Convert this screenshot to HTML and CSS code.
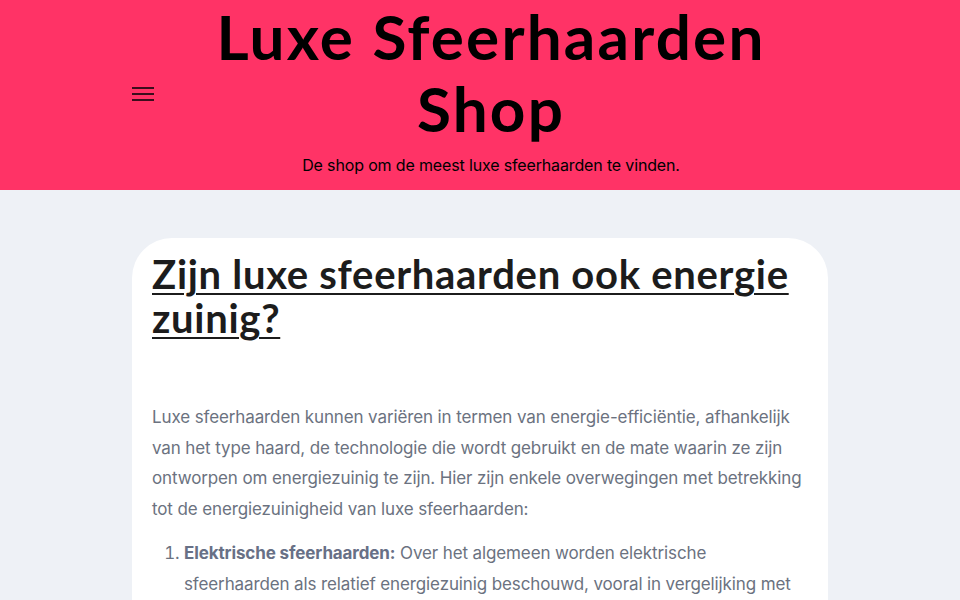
FILE: index.html
```
<!DOCTYPE html>
<html lang="nl">
<head>
<meta charset="utf-8">
<title>Luxe Sfeerhaarden Shop</title>
<link rel="stylesheet" href="styles.css">
</head>
<body>
<header class="site-header">
  <div class="header-inner">
    <button class="menu-toggle" aria-label="Menu">
      <svg width="22" height="14" viewBox="0 0 22 14"><rect x="0" y="0" width="22" height="2" fill="#3b0d1c"/><rect x="0" y="6" width="22" height="2" fill="#3b0d1c"/><rect x="0" y="12" width="22" height="2" fill="#3b0d1c"/></svg>
    </button>
    <div class="branding">
      <h1 class="site-title">Luxe Sfeerhaarden Shop</h1>
      <p class="site-tagline">De shop om de meest luxe sfeerhaarden te vinden.</p>
    </div>
  </div>
</header>
<main class="content">
  <article class="card">
    <h2 class="entry-title"><a href="#">Zijn luxe sfeerhaarden ook energie zuinig?</a></h2>
    <div class="entry-body">
      <p>Luxe sfeerhaarden kunnen variëren in termen van energie-efficiëntie, afhankelijk van het type haard, de technologie die wordt gebruikt en de mate waarin ze zijn ontworpen om energiezuinig te zijn. Hier zijn enkele overwegingen met betrekking tot de energiezuinigheid van luxe sfeerhaarden:</p>
      <ol>
        <li><strong>Elektrische sfeerhaarden:</strong> Over het algemeen worden elektrische sfeerhaarden als relatief energiezuinig beschouwd, vooral in vergelijking met traditionele houtgestookte haarden.</li>
      </ol>
    </div>
  </article>
</main>
</body>
</html>
```

FILE: styles.css
```
html, body {
  margin: 0;
  padding: 0;
}
body {
  background: #eef1f6;
  font-family: "Inter", "Open Sans", sans-serif;
  height: 600px;
  overflow: hidden;
}
.site-header {
  background: #ff3366;
  height: 190px;
}
.header-inner {
  width: 696px;
  margin: 0 auto;
  display: flex;
  align-items: center;
  height: 190px;
}
.menu-toggle {
  background: none;
  border: 0;
  padding: 0;
  width: 22px;
  height: 14px;
  display: block;
  margin-top: -2px;
  flex: none;
}
.menu-toggle svg { display: block; }
.branding {
  flex: 1;
  align-self: flex-start;
  text-align: center;
}
.site-title {
  margin: 0;
  font-family: "Lato", sans-serif;
  font-weight: 700;
  font-size: 62px;
  line-height: 72px;
  letter-spacing: 2.2px;
  color: #000;
}
.site-tagline {
  margin: 9px 0 0;
  font-size: 16px;
  line-height: 24px;
  letter-spacing: -0.15px;
  color: #000;
}
.content {
  padding-top: 48px;
}
.card {
  width: 696px;
  margin: 0 auto;
  background: #fff;
  border-radius: 40px 40px 0 0;
  padding: 14px 20px 40px;
  box-sizing: border-box;
}
.entry-title {
  margin: 0;
  font-family: "Lato", sans-serif;
  font-weight: 700;
  font-size: 40px;
  line-height: 44px;
  letter-spacing: 0.7px;
}
.entry-title a {
  color: #1c1c1c;
  text-decoration: underline;
  text-decoration-thickness: 2px;
  text-underline-offset: 4px;
}
.entry-body {
  padding-top: 62px;
  color: #6b7280;
  font-size: 17px;
  line-height: 30.6px;
  letter-spacing: -0.12px;
}
.entry-body p {
  margin: 0 0 14px;
}
.entry-body ol {
  margin: 0;
  padding-left: 32px;
}
.entry-body strong {
  font-weight: 700;
  color: #687086;
}
```
